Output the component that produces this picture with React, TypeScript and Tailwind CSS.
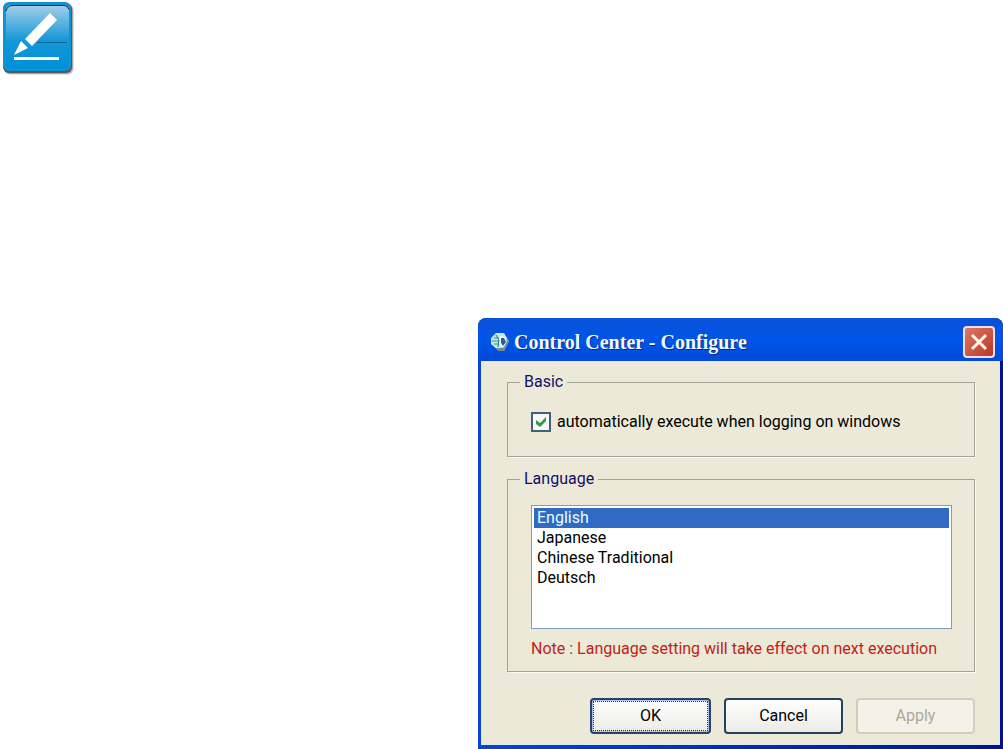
import { useState } from 'react';

const languages = ['English', 'Japanese', 'Chinese Traditional', 'Deutsch'];

const legendClass = '-ml-[11px] px-1 leading-6 text-[#10106b]';
const groupClass = 'border border-[#a3a393] pr-[22px] pl-[23px] shadow-[1px_1px_0_#fafaf0]';
const buttonClass = 'h-9 flex-1 rounded border-2 leading-5';

function NoteIcon() {
  return (
    <svg width="76" height="76" viewBox="0 0 76 76" role="img" aria-label="Note">
      <defs>
        <linearGradient id="tile" x1="0" y1="0" x2="0" y2="1">
          <stop offset="0" stopColor="#a4cfe8" />
          <stop offset="0.55" stopColor="#1598d8" />
          <stop offset="1" stopColor="#0090d7" />
        </linearGradient>
      </defs>
      <rect x="4" y="4" width="70" height="71" rx="7" fill="#e2e2e2" />
      <rect x="4" y="4" width="69" height="70" rx="6" fill="#a5a5a5" />
      <rect x="3" y="3" width="69" height="70" rx="6" fill="#55585a" />
      <rect x="3" y="2" width="68" height="69" rx="6" fill="#0f94d3" />
      <rect x="6" y="5" width="63" height="64" rx="5" fill="url(#tile)" />
      <path d="M6 11q1-5 6-5.500h52q4 0 5 4" fill="none" stroke="#12222c" />
      <path d="M37 42.500h30" stroke="#08618e" />
      <path d="M50 13 57 20 32 46 25 39Z" fill="#fff" />
      <path d="M21 41 28 48 14 55Z" fill="#fff" />
      <path d="M14 57h45v3H14z" fill="#fff" />
    </svg>
  );
}

function AppIcon() {
  return (
    <svg width="20" height="20" viewBox="0 0 20 20" aria-hidden="true">
      <path d="M6 1h8l5 8-5 10H9L1 12V6Z" fill="#c4e6e8" />
      <path d="M17 6 19 9 14 19H9L6 16h7Z" fill="#6d8c98" />
      <path d="M10 4h4l3 5-3 6h-3l-3-5Z" fill="#eefdfc" />
      <path d="M11 6h3l2 4-3 4-2-3Z" fill="#2560a0" />
      <path d="M4 6h5M2 9h7M4 12h5" stroke="#2d93a0" />
      <path d="M6 3 9 8l-1 7" fill="none" stroke="#1c7390" />
    </svg>
  );
}

export default function App() {
  const [autoRun, setAutoRun] = useState(true);
  const [language, setLanguage] = useState('English');

  return (
    <main className="min-h-screen bg-white">
      <NoteIcon />
      <section
        aria-labelledby="dialog-title"
        className="mt-[242px] ml-auto w-full max-w-[525px] overflow-hidden rounded-t-lg bg-linear-to-r from-[#0a45cf] to-[#00119b] px-[3px] pb-1 font-['Roboto',sans-serif] text-base text-black"
      >
        <header className="-mx-[3px] flex h-[43px] items-center bg-linear-to-b from-[#0a50d8] via-[#0055ea] to-[#0049d8] pt-1 pr-2 pl-3">
          <AppIcon />
          <h1
            id="dialog-title"
            className="ml-1 flex-1 font-['Liberation_Serif',serif] text-xl leading-6 font-bold text-[#eefcff] [text-shadow:1px_1px_#0a2a80]"
          >
            Control Center - Configure
          </h1>
          <button
            type="button"
            aria-label="Close"
            className="flex size-8 items-center justify-center rounded border-2 border-[#f1dfe6] bg-linear-to-br from-[#db7765] to-[#b93527]"
          >
            <svg width="18" height="18" viewBox="0 0 18 18" aria-hidden="true">
              <path d="M2 2 16 16M16 2 2 16" stroke="#fff4e2" strokeWidth="3" />
            </svg>
          </button>
        </header>

        <form
          className="border-x border-b border-[#dfe9f0] bg-[#ece9d8] pt-[9px] pr-6 pb-[10px] pl-[25px]"
          onSubmit={(e) => e.preventDefault()}
        >
          <fieldset className={groupClass}>
            <legend className={legendClass}>Basic</legend>
            <label className="mt-[18px] mb-6 flex items-center leading-5">
              <span className="relative mr-[6px] flex">
                <input
                  type="checkbox"
                  checked={autoRun}
                  onChange={(e) => setAutoRun(e.target.checked)}
                  className="peer size-5 appearance-none border-2 border-[#3f6378] bg-[#f8f9f4]"
                />
                <svg
                  viewBox="0 0 20 20"
                  aria-hidden="true"
                  className="pointer-events-none absolute inset-0 hidden size-5 peer-checked:block"
                >
                  <path d="M5 8 9 11 15 5V9L9 15 5 12Z" fill="#35994c" />
                </svg>
              </span>
              automatically execute when logging on windows
            </label>
          </fieldset>

          <fieldset className={`${groupClass} mt-[10px]`}>
            <legend className={legendClass}>Language</legend>
            <select
              size={6}
              aria-label="Language"
              value={language}
              onChange={(e) => setLanguage(e.target.value)}
              className="mt-[14px] block h-[124px] w-full appearance-none overflow-hidden border border-[#7f9db9] bg-white p-[2px] outline-none"
            >
              {languages.map((name) => (
                <option
                  key={name}
                  value={name}
                  className="h-5 min-h-5 px-[3px] py-0 leading-5 checked:bg-[#316ac5] checked:bg-linear-to-r checked:from-[#316ac5] checked:to-[#316ac5] checked:text-[#e4ffff] checked:[-webkit-text-fill-color:#e4ffff]"
                >
                  {name}
                </option>
              ))}
            </select>
            <p className="mt-[10px] mb-3 leading-5 text-[#c01f17]">
              Note : Language setting will take effect on next execution
            </p>
          </fieldset>

          <div className="mt-[26px] ml-auto flex max-w-[385px] gap-[13px]">
            <button
              type="submit"
              className={`${buttonClass} border-[#27426d] bg-linear-to-b from-white to-[#ecebe6] p-px shadow-[inset_0_0_0_1px_#a9c0ec]`}
            >
              <span className="flex h-full items-center justify-center border border-dotted border-[#24345c]">OK</span>
            </button>
            <button
              type="button"
              className={`${buttonClass} border-[#23425f] bg-linear-to-b from-white to-[#ecebe6]`}
            >
              Cancel
            </button>
            <button
              type="button"
              disabled
              className={`${buttonClass} border-[#d0cebf] bg-[#f4f2e8] text-[#aaa99b]`}
            >
              Apply
            </button>
          </div>
        </form>
      </section>
    </main>
  );
}
